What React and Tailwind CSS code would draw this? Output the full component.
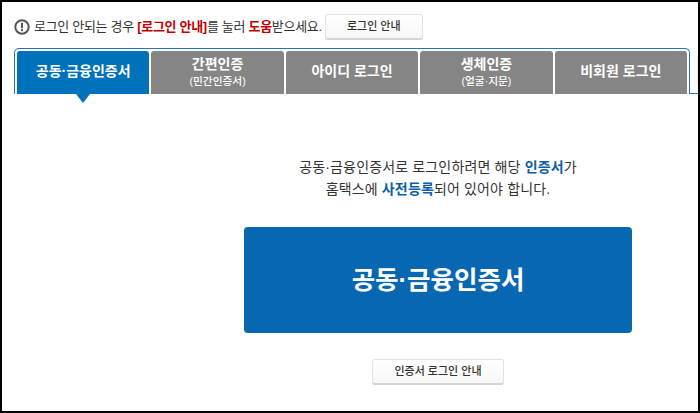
import React from "react";

const tabs = [
  { title: "공동·금융인증서", active: true },
  { title: "간편인증", sub: "(민간인증서)" },
  { title: "아이디 로그인" },
  { title: "생체인증", sub: "(얼굴·지문)" },
  { title: "비회원 로그인" },
];

const GuideButton = ({ label, className }) => (
  <button
    type="button"
    className={`h-[26px] bg-gradient-to-b from-white to-[#f7f7f7] border border-[#e2e2e2] border-b-2 border-b-[#d4d4d4] rounded-[3px] text-[11px] font-medium text-[#333] ${className}`}
  >
    {label}
  </button>
);

const App = () => {
  return (
    <div
      className="w-[700px] h-[413px] border-2 border-black bg-white overflow-hidden text-[#333]"
      style={{ fontFamily: '"Liberation Sans", "Noto Sans CJK KR", sans-serif' }}
    >
      <div className="flex items-center h-[26px] mt-[12px] ml-[12px]">
        <svg width="16" height="16" viewBox="0 0 16 16" className="mr-[4px]">
          <circle cx="8" cy="8" r="6.7" fill="none" stroke="#555" strokeWidth="2" />
          <rect x="7" y="3.8" width="2" height="5.4" fill="#555" />
          <rect x="7" y="10.2" width="2" height="2" fill="#555" />
        </svg>
        <p className="text-[13px] tracking-[-0.3px] whitespace-nowrap">
          로그인 안되는 경우{" "}
          <b className="text-[#c00000]">[로그인 안내]</b>를 눌러{" "}
          <b className="text-[#c00000]">도움</b>받으세요.
        </p>
        <GuideButton label="로그인 안내" className="w-[98px] ml-[3px]" />
      </div>

      <div className="flex mt-[8px] ml-[12px]">
        <div className="flex gap-[2px] w-[676px] h-[46px] pt-[2px] px-[2px] border border-b-0 border-[#2a72bd] rounded-t-[5px]">
          {tabs.map((tab) => (
            <div
              key={tab.title}
              className={`relative flex-1 flex flex-col items-center justify-center pb-[2px] rounded-t-[3px] text-white ${
                tab.active ? "bg-[#0072bc]" : "bg-[#858585]"
              }`}
            >
              <span className="text-[14px] font-bold leading-[19px]">{tab.title}</span>
              {tab.sub && (
                <span className="text-[10.7px] font-medium leading-[15px]">{tab.sub}</span>
              )}
              {tab.active && (
                <span className="absolute top-full left-1/2 -translate-x-1/2 border-x-[7px] border-x-transparent border-t-[9px] border-t-[#0072bc]" />
              )}
            </div>
          ))}
        </div>
        <div className="flex flex-col flex-1">
          <div className="self-end w-[1px] h-[28px] mt-[7px] bg-[#e6e6e6]" />
          <div className="mt-auto h-[1px] bg-[#2a72bd]" />
        </div>
      </div>

      <div className="flex flex-col items-center pl-[176px]">
        <p className="mt-[62px] text-center text-[14px] tracking-[0.15px] leading-[22px]">
          공동·금융인증서로 로그인하려면 해당 <b className="text-[#0a5fa8]">인증서</b>가
          <br />
          홈택스에 <b className="text-[#0a5fa8]">사전등록</b>되어 있어야 합니다.
        </p>
        <button
          type="button"
          className="w-[388px] h-[106px] mt-[27px] bg-[#0767b1] rounded-[4px] text-white text-[25.5px] font-bold"
        >
          공동·금융인증서
        </button>
        <GuideButton label="인증서 로그인 안내" className="w-[132px] mt-[26px]" />
      </div>
    </div>
  );
};

export default App;
